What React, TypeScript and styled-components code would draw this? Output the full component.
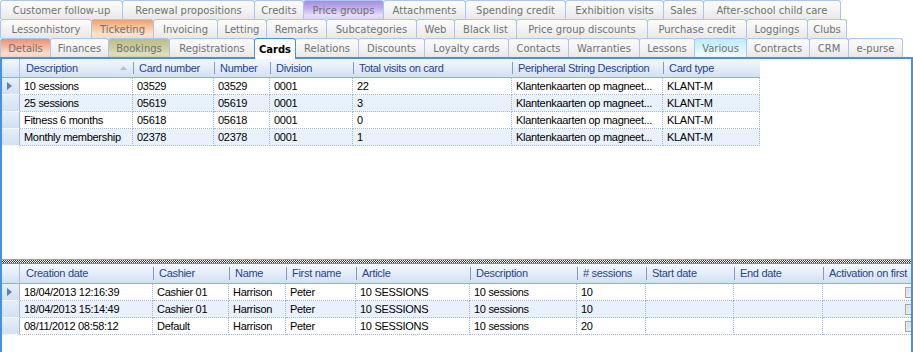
import React from "react";
import styled, { createGlobalStyle, css } from "styled-components";

const GlobalStyle = createGlobalStyle`
  html, body { margin: 0; padding: 0; background: #fff; }
  body { font-family: "Liberation Sans", Arial, sans-serif; }
`;

type Tone = "plain" | "purple" | "orange" | "salmon" | "olive" | "cyan";

const tones: Record<Tone, string> = {
  plain: "linear-gradient(#fcfcfc, #f2f2f2 55%, #e8e8e8)",
  purple: "linear-gradient(#a68de0, #bfaeee 40%, #e6e0fb 80%, #d9d0f5)",
  orange: "linear-gradient(#f2a070, #f8c49b 40%, #fde4ca 80%, #f8dabd)",
  salmon: "linear-gradient(#ee9070, #f4b59a 40%, #f9ddcf 80%, #f4d2c2)",
  olive: "linear-gradient(#bdbd84, #cbcb9c 45%, #dfdfbb 85%, #d5d5ab)",
  cyan: "linear-gradient(#bcedfa, #d2f4fc 45%, #ebfbfe 85%, #e0f7fd)",
};

type TabDef = [string, number, number, Tone?, boolean?];

const row1: TabDef[] = [
  ["Customer follow-up", 0, 122],
  ["Renewal propositions", 122, 254],
  ["Credits", 254, 303],
  ["Price groups", 303, 383, "purple"],
  ["Attachments", 383, 465],
  ["Spending credit", 465, 565],
  ["Exhibition visits", 565, 663],
  ["Sales", 663, 703],
  ["After-school child care", 703, 840],
];

const row2: TabDef[] = [
  ["Lessonhistory", 0, 91],
  ["Ticketing", 91, 153, "orange"],
  ["Invoicing", 153, 217],
  ["Letting", 217, 266],
  ["Remarks", 266, 326],
  ["Subcategories", 326, 416],
  ["Web", 416, 454],
  ["Black list", 454, 516],
  ["Price group discounts", 516, 647],
  ["Purchase credit", 647, 746],
  ["Loggings", 746, 807],
  ["Clubs", 807, 846],
];

const row3: TabDef[] = [
  ["Details", 0, 50, "salmon"],
  ["Finances", 50, 108],
  ["Bookings", 108, 169, "olive"],
  ["Registrations", 169, 254],
  ["Cards", 254, 295, "plain", true],
  ["Relations", 295, 358],
  ["Discounts", 358, 424],
  ["Loyalty cards", 424, 508],
  ["Contacts", 508, 568],
  ["Warranties", 568, 639],
  ["Lessons", 639, 694],
  ["Various", 694, 746, "cyan"],
  ["Contracts", 746, 809],
  ["CRM", 809, 848],
  ["e-purse", 848, 902],
];

const Screen = styled.div`
  width: 913px;
  height: 352px;
  overflow: hidden;
  background: #fff;
`;

const TabStrip = styled.div`
  display: flex;
  flex-direction: column;
`;

const TabRow = styled.div`
  display: flex;
  align-items: flex-start;
  height: 19px;
  position: relative;
`;

const Tab = styled.div<{ $w: number; $tone: Tone; $active?: boolean }>`
  flex: none;
  box-sizing: border-box;
  width: ${(p) => p.$w}px;
  height: 19px;
  margin-right: -1px;
  border: 1px solid #a8c6ee;
  border-bottom: none;
  border-radius: 3px 3px 0 0;
  background: ${(p) => tones[p.$tone]};
  color: #727272;
  font-family: "DejaVu Sans", Verdana, sans-serif;
  font-size: 10px;
  display: flex;
  align-items: center;
  justify-content: center;
  white-space: nowrap;
  overflow: hidden;
  ${(p) =>
    p.$active &&
    css`
      background: #fff;
      color: #000;
      font-weight: bold;
      height: 21px;
      margin-bottom: -2px;
      border-color: #4a90e2;
      position: relative;
      z-index: 2;
    `}
`;

const Panel = styled.div`
  box-sizing: border-box;
  height: 295px;
  border: 2px solid #4a90e2;
  border-bottom: none;
  background: #fff;
  display: flex;
  flex-direction: column;
  overflow: hidden;
`;

const TopPane = styled.div`
  height: 200px;
  flex: none;
  overflow: hidden;
`;

const Splitter = styled.div`
  flex: none;
  height: 3px;
  border-top: 1px solid #86a9d6;
  border-bottom: 1px solid #5d93d8;
  background: repeating-conic-gradient(#3a3a3a 0 25%, #ffffff 0 50%) 0 0 / 2px 2px;
`;

const BottomPane = styled.div`
  flex: 1;
  overflow: hidden;
`;

const Table = styled.table<{ $w: number }>`
  width: ${(p) => p.$w}px;
  border-collapse: separate;
  border-spacing: 0;
  table-layout: fixed;
  font-family: "Liberation Sans", Arial, sans-serif;
  font-size: 11px;
  line-height: 13px;
  letter-spacing: -0.3px;
`;

const HeadRow = styled.tr<{ $h: number }>`
  height: ${(p) => p.$h}px;
`;

const Head = styled.th<{ $sep?: boolean }>`
  position: relative;
  padding: 0 0 0 6px;
  text-align: left;
  font-weight: normal;
  color: #1d4396;
  white-space: nowrap;
  overflow: hidden;
  background: linear-gradient(#f3f7fc, #e4edf8 50%, #d2e0f2);
  border-bottom: 1px solid #90aedb;
  ${(p) =>
    p.$sep &&
    css`
      &::before {
        content: "";
        position: absolute;
        left: 0;
        top: 3px;
        bottom: 3px;
        width: 1px;
        background: #7b9dd0;
      }
    `}
`;

const Corner = styled.th`
  padding: 0;
  background: linear-gradient(#f3f7fc, #e4edf8 50%, #d2e0f2);
  border-bottom: 1px solid #90aedb;
  border-right: 1px solid #a8bfe0;
`;

const SortMark = styled.svg`
  position: absolute;
  right: 6px;
  top: 7px;
`;

const BodyRow = styled.tr<{ $alt: boolean }>`
  height: 17px;
  background: ${(p) => (p.$alt ? "#e9f1fc" : "#fff")};
`;

const RowHead = styled.td`
  padding: 0 0 0 5px;
  background: linear-gradient(#e6eef9, #d3e0f1);
  border-right: 1px solid #a3bbdc;
  border-bottom: 1px solid #f3f7fc;
  vertical-align: middle;
`;

const Cell = styled.td`
  padding: 0 2px 0 4px;
  color: #000;
  white-space: nowrap;
  overflow: hidden;
  border-right: 1px dotted #9fbade;
  border-bottom: 1px dotted #9fbade;
`;

const CheckCell = styled(Cell)`
  text-align: center;
  padding: 0;
`;

const CheckBox = styled.span`
  display: inline-block;
  vertical-align: middle;
  box-sizing: border-box;
  width: 11px;
  height: 11px;
  border: 1px solid #a5a5a5;
  background: linear-gradient(135deg, #d6d6d6, #f7f7f7);
  box-shadow: inset 0 0 0 1px #e9e9e9;
`;

type Col = { label: string; w: number; sort?: boolean; check?: boolean };

const topCols: Col[] = [
  { label: "Description", w: 113, sort: true },
  { label: "Card number", w: 81 },
  { label: "Number", w: 56 },
  { label: "Division", w: 83 },
  { label: "Total visits on card", w: 159 },
  { label: "Peripheral String Description", w: 151 },
  { label: "Card type", w: 97 },
];

const topRows = [
  ["10 sessions", "03529", "03529", "0001", "22", "Klantenkaarten op magneet...", "KLANT-M"],
  ["25 sessions", "05619", "05619", "0001", "3", "Klantenkaarten op magneet...", "KLANT-M"],
  ["Fitness 6 months", "05618", "05618", "0001", "0", "Klantenkaarten op magneet...", "KLANT-M"],
  ["Monthly membership", "02378", "02378", "0001", "1", "Klantenkaarten op magneet...", "KLANT-M"],
];

const bottomCols: Col[] = [
  { label: "Creation date", w: 133 },
  { label: "Cashier", w: 76 },
  { label: "Name", w: 57 },
  { label: "First name", w: 70 },
  { label: "Article", w: 114 },
  { label: "Description", w: 107 },
  { label: "# sessions", w: 69 },
  { label: "Start date", w: 88 },
  { label: "End date", w: 89 },
  { label: "Activation on first", w: 176, check: true },
];

const bottomRows = [
  ["18/04/2013 12:16:39", "Cashier 01", "Harrison", "Peter", "10 SESSIONS", "10 sessions", "10", "", "", ""],
  ["18/04/2013 15:14:49", "Cashier 01", "Harrison", "Peter", "10 SESSIONS", "10 sessions", "10", "", "", ""],
  ["08/11/2012 08:58:12", "Default", "Harrison", "Peter", "10 SESSIONS", "10 sessions", "20", "", "", ""],
];

const ROW_HEAD = 18;

const Pointer = () => (
  <svg width="5" height="8" viewBox="0 0 5 8" style={{ display: "block" }}>
    <path d="M0 0 L5 4 L0 8 Z" fill="#5c80bf" />
  </svg>
);

const Grid: React.FC<{ cols: Col[]; rows: string[][]; headH: number }> = ({ cols, rows, headH }) => {
  const total = ROW_HEAD + cols.reduce((s, c) => s + c.w, 0);
  return (
    <Table $w={total}>
      <colgroup>
        <col style={{ width: ROW_HEAD }} />
        {cols.map((c) => (
          <col key={c.label} style={{ width: c.w }} />
        ))}
      </colgroup>
      <thead>
        <HeadRow $h={headH}>
          <Corner />
          {cols.map((c, i) => (
            <Head key={c.label} $sep={i > 0}>
              {c.label}
              {c.sort && (
                <SortMark width="7" height="4" viewBox="0 0 7 4">
                  <path d="M0 4 L3.5 0 L7 4 Z" fill="#a9c0df" />
                </SortMark>
              )}
            </Head>
          ))}
        </HeadRow>
      </thead>
      <tbody>
        {rows.map((r, ri) => (
          <BodyRow key={ri} $alt={ri % 2 === 1}>
            <RowHead>{ri === 0 && <Pointer />}</RowHead>
            {cols.map((c, ci) =>
              c.check ? (
                <CheckCell key={ci}>
                  <CheckBox />
                </CheckCell>
              ) : (
                <Cell key={ci}>{r[ci]}</Cell>
              )
            )}
          </BodyRow>
        ))}
      </tbody>
    </Table>
  );
};

const renderRow = (defs: TabDef[]) =>
  defs.map(([label, start, end, tone, active]) => (
    <Tab key={label} $w={end - start + 1} $tone={tone ?? "plain"} $active={active}>
      {label}
    </Tab>
  ));

export default function App() {
  return (
    <Screen>
      <GlobalStyle />
      <TabStrip>
        <TabRow>{renderRow(row1)}</TabRow>
        <TabRow>{renderRow(row2)}</TabRow>
        <TabRow>{renderRow(row3)}</TabRow>
      </TabStrip>
      <Panel>
        <TopPane>
          <Grid cols={topCols} rows={topRows} headH={19} />
        </TopPane>
        <Splitter />
        <BottomPane>
          <Grid cols={bottomCols} rows={bottomRows} headH={20} />
        </BottomPane>
      </Panel>
    </Screen>
  );
}
